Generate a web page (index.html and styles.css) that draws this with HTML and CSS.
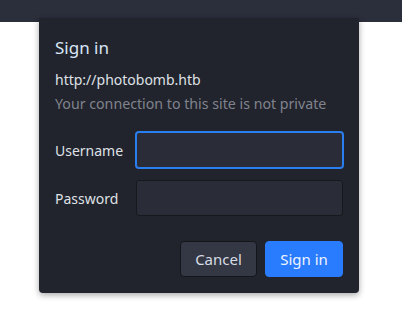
FILE: index.html
```html
<!DOCTYPE html>
<html lang="en">
    <head>
        <meta charset="utf-8">
        <title>Sign in</title>
        <link rel="stylesheet" href="styles.css">
    </head>

    <body>
        <div class="toolbar"></div>

        <form class="auth-dialog">
            <h1 class="auth-title">Sign in</h1>
            <p class="auth-origin">http://photobomb.htb</p>
            <p class="auth-note">Your connection to this site is not private</p>

            <div class="auth-fields">
                <label for="username">Username</label>
                <input id="username" class="field focused" type="text">
                <label for="password">Password</label>
                <input id="password" class="field" type="password">
            </div>

            <div class="auth-buttons">
                <button type="button" class="btn">Cancel</button
                ><button type="submit" class="btn btn-primary">Sign in</button>
            </div>
        </form>
    </body>
</html>
```

FILE: styles.css
```css
html, body {
    margin: 0;
    height: 100%;
    background: #ffffff;
    font-family: "Noto Sans", "Open Sans", sans-serif;
}

.toolbar {
    height: 22px;
    background: #2b2e3b;
}

.auth-dialog {
    position: absolute;
    left: 39px;
    top: 18px;
    width: 320px;
    height: 275px;
    box-sizing: border-box;
    padding: 15px 16px 16px;
    display: flex;
    flex-direction: column;

    background: #22242d;
    color: #dfe1e6;
    border-radius: 0 0 4px 4px;
    box-shadow: 0 2px 6px rgba(0, 0, 0, 0.35);
}

.auth-title {
    margin: 0;
    font-size: 17px;
    font-weight: normal;
    line-height: 30px;
    color: #d9e6f7;
}

.auth-origin,
.auth-note {
    margin: 0;
    font-size: 14px;
    line-height: 24px;
}

.auth-origin {
    margin-top: 5px;
}

.auth-note {
    color: #80838d;
    font-size: 14.2px;
}

.auth-fields {
    display: grid;
    grid-template-columns: 81px 1fr;
    row-gap: 12px;
    align-items: center;
    margin-top: 16px;
    font-size: 14px;
}

.field {
    box-sizing: border-box;
    width: 100%;
    min-width: 0;
    height: 36px;
    margin: 0;
    padding: 0 8px;
    background: #2a2c37;
    border: 1px solid #17181e;
    border-radius: 3px;
    color: #e0e0e0;
    font: inherit;
    outline: none;
}

.field.focused {
    border-color: #2a7ff0;
    box-shadow: 0 0 0 1px #2a7ff0;
}

.auth-buttons {
    margin-top: auto;
    display: flex;
    justify-content: flex-end;
    gap: 8px;
}

.btn {
    box-sizing: border-box;
    height: 36px;
    min-width: 77px;
    padding: 0 14px;
    border: 1px solid #15161b;
    border-radius: 4px;
    background: #343744;
    color: #d7dde6;
    font: inherit;
    font-size: 15px;
}

.btn-primary {
    min-width: 78px;
    border-color: #2a7cff;
    background: #2a7cff;
    color: #eef4ff;
}
```
